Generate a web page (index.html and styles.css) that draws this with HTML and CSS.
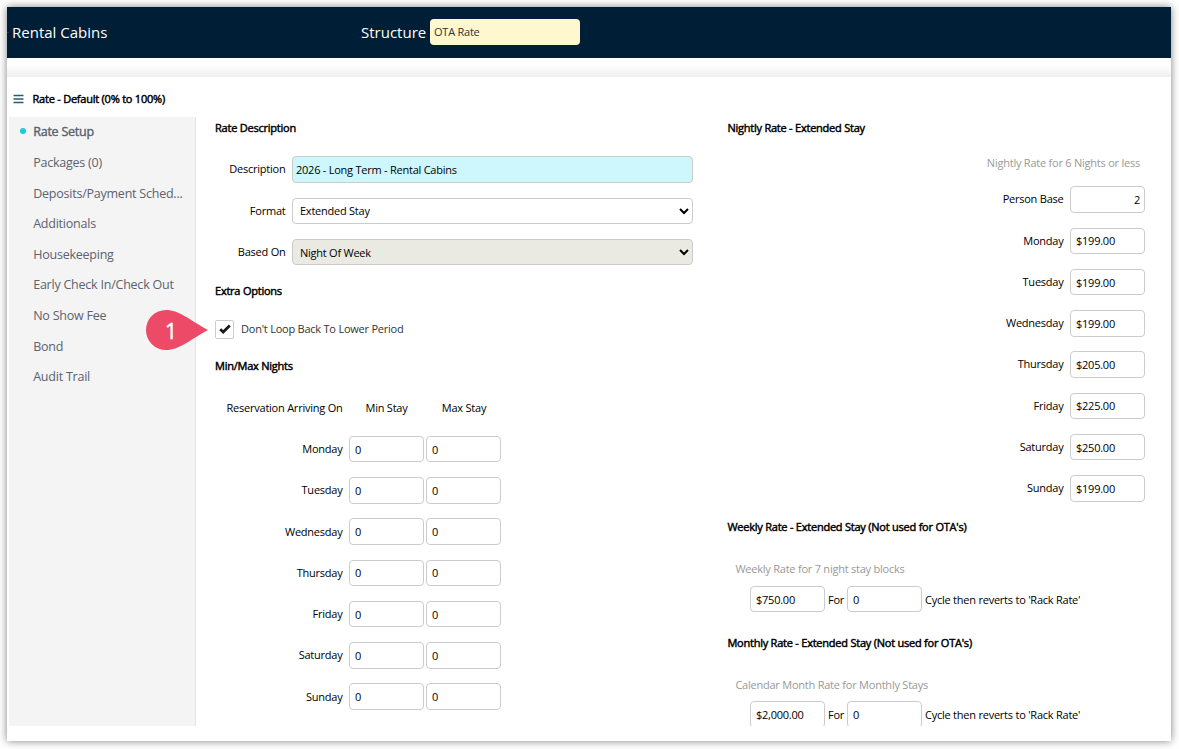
FILE: index.html
```html
<!DOCTYPE html>
<html lang="en">
<head>
    <meta charset="UTF-8">
    <meta name="viewport" content="width=device-width, initial-scale=1.0">
    <title>Rate Setup</title>
    <link rel="stylesheet" href="styles.css">
</head>
<body>
    <div class="window">
        <header class="topbar">
            <span class="dash">-</span>
            <h1>Rental Cabins</h1>
            <label class="structure-label">Structure</label>
            <input class="structure" type="text" value="OTA Rate">
        </header>
        <div class="band"></div>
        <div class="page-title">
            <svg class="menu-icon" width="11" height="10" viewBox="0 0 11 10"><path d="M0.5 1.5h10M0.5 5h10M0.5 8.5h10" stroke="#2f5a6e" stroke-width="1.4"/></svg>
            <h2 class="heading">Rate - Default (0% to 100%)</h2>
        </div>
        <div class="body">
            <nav class="sidebar">
                <a class="active">Rate Setup</a>
                <a>Packages (0)</a>
                <a>Deposits/Payment Sched...</a>
                <a>Additionals</a>
                <a>Housekeeping</a>
                <a>Early Check In/Check Out</a>
                <a>No Show Fee</a>
                <a>Bond</a>
                <a>Audit Trail</a>
            </nav>

            <!-- Rate details -->
            <main class="details">
                <h3 class="heading">Rate Description</h3>
                <div class="row"><label>Description</label><input class="wide filled" type="text" value="2026 - Long Term - Rental Cabins"></div>
                <div class="row"><label>Format</label><select class="wide"><option>Extended Stay</option></select></div>
                <div class="row"><label>Based On</label><select class="wide locked"><option>Night Of Week</option></select></div>

                <h3 class="heading extra">Extra Options</h3>
                <div class="check-row">
                    <span class="checkbox"><svg width="12" height="10" viewBox="0 0 12 10"><path d="M1.2 5.2 4.2 8 10.8 1.4" fill="none" stroke="#1c1c1c" stroke-width="2.8"/></svg></span>
                    <span class="check-label">Don't Loop Back To Lower Period</span>
                    <div class="marker">
                        <svg width="62" height="40" viewBox="0 0 62 40"><path d="M20 0C33 0 42 9 62 20C42 31 33 40 20 40A20 20 0 0 1 20 0Z" fill="#ec4a67"/></svg>
                        <span>1</span>
                    </div>
                </div>

                <h3 class="heading minmax">Min/Max Nights</h3>
                <div class="row nights head"><label>Reservation Arriving On</label><span>Min Stay</span><span>Max Stay</span></div>
                <div class="row nights"><label>Monday</label><input type="text" value="0"><input type="text" value="0"></div>
                <div class="row nights"><label>Tuesday</label><input type="text" value="0"><input type="text" value="0"></div>
                <div class="row nights"><label>Wednesday</label><input type="text" value="0"><input type="text" value="0"></div>
                <div class="row nights"><label>Thursday</label><input type="text" value="0"><input type="text" value="0"></div>
                <div class="row nights"><label>Friday</label><input type="text" value="0"><input type="text" value="0"></div>
                <div class="row nights"><label>Saturday</label><input type="text" value="0"><input type="text" value="0"></div>
                <div class="row nights"><label>Sunday</label><input type="text" value="0"><input type="text" value="0"></div>
            </main>

            <!-- Rate amounts -->
            <section class="rates">
                <h3 class="heading">Nightly Rate - Extended Stay</h3>
                <p class="hint right">Nightly Rate for 6 Nights or less</p>
                <div class="row"><label>Person Base</label><input class="number" type="text" value="2"></div>
                <div class="row"><label>Monday</label><input type="text" value="$199.00"></div>
                <div class="row"><label>Tuesday</label><input type="text" value="$199.00"></div>
                <div class="row"><label>Wednesday</label><input type="text" value="$199.00"></div>
                <div class="row"><label>Thursday</label><input type="text" value="$205.00"></div>
                <div class="row"><label>Friday</label><input type="text" value="$225.00"></div>
                <div class="row"><label>Saturday</label><input type="text" value="$250.00"></div>
                <div class="row"><label>Sunday</label><input type="text" value="$199.00"></div>

                <h3 class="heading weekly">Weekly Rate - Extended Stay (Not used for OTA's)</h3>
                <p class="hint">Weekly Rate for 7 night stay blocks</p>
                <div class="cycle"><input type="text" value="$750.00"><span class="for">For</span><input type="text" value="0"><span>Cycle then reverts to 'Rack Rate'</span></div>

                <h3 class="heading monthly">Monthly Rate - Extended Stay (Not used for OTA's)</h3>
                <p class="hint">Calendar Month Rate for Monthly Stays</p>
                <div class="cycle"><input type="text" value="$2,000.00"><span class="for">For</span><input type="text" value="0"><span>Cycle then reverts to 'Rack Rate'</span></div>
            </section>
        </div>
    </div>
</body>
</html>
```
FILE: styles.css
```css
* { box-sizing: border-box; }
body { margin: 0; padding: 7px 8px 8px 7px; height: 749px; overflow: hidden; background: #fff; font-family: "Open Sans", sans-serif; font-size: 11px; letter-spacing: -0.23px; color: #000; }
h1, h2, h3, p { margin: 0; font-weight: 400; }
.window { height: 734px; background: #fff; box-shadow: 0 0 8px rgba(0, 0, 0, 0.5); }

.topbar { display: flex; align-items: center; height: 51px; padding-bottom: 2px; background: #001e36; color: #fff; font-size: 15px; letter-spacing: 0; }
.dash { width: 5px; font-size: 5px; color: #a98a55; }
.topbar h1 { width: 349px; font-size: 15px; }
.topbar .structure-label { width: 69px; }
.topbar .structure { width: 150px; height: 26px; padding: 0 4px; border: none; background: #fff8cf; color: #333; }
.band { height: 19px; background: linear-gradient(#fff 35%, #efefef); }

.page-title { display: flex; align-items: center; height: 40px; padding: 4px 0 0 6px; }
.menu-icon { margin-right: 8.5px; }
.heading { height: 22px; line-height: 22px; font-size: 11px; -webkit-text-stroke: 0.45px #000; white-space: nowrap; }

.body { display: flex; height: 609px; overflow: hidden; padding-left: 2px; }
.sidebar { width: 187px; height: 609px; padding-top: 0.4px; background: #f4f4f4; border-right: 1px solid #e6e6e6; }
.sidebar a { display: block; position: relative; height: 30.6px; padding-left: 24.2px; line-height: 30.6px; font-size: 12.5px; color: #5b6270; white-space: nowrap; }
.sidebar .active { -webkit-text-stroke: 0.4px #5b6270; }
.sidebar .active::before { content: ""; position: absolute; left: 11px; top: 10.5px; width: 6px; height: 6px; border-radius: 50%; background: #1bcbdb; }

.details { width: 512px; padding-left: 19px; }
.rates { width: 437px; padding-left: 19.4px; }
.row { display: flex; align-items: center; height: 41.25px; }
.row label { text-align: right; margin-right: 6px; padding: 0 0.5px 1.4px 0; white-space: nowrap; }
input, select { width: 75px; height: 26.5px; padding: 0 5px; border: 1px solid #ccc; border-radius: 4px; background: #fff; font-family: inherit; font-size: 11px; letter-spacing: -0.24px; color: #000; }

.details .heading + .row { margin-top: 10px; }
.details .row label { width: 71px; }
.wide { width: 401px; padding: 0 3px; }
.filled { background: #cef7fd; }
.locked { background: #eaeae2; }

.extra { margin-top: 7px; }
.check-row { display: flex; align-items: center; position: relative; height: 41px; margin-top: 7px; color: #333; }
.check-label { padding-bottom: 1px; }
.checkbox { display: flex; align-items: center; justify-content: center; width: 19px; height: 19px; margin-right: 7px; border: 1px solid #ccc; border-radius: 2px; }
.marker { position: absolute; left: -69px; top: 1px; width: 62px; height: 40px; }
.marker span { position: absolute; left: 0; top: 0; width: 50px; line-height: 40px; text-align: center; font-size: 22px; -webkit-text-stroke: 0.4px #fff; color: #fff; }

.minmax { margin-top: 5px; }
.details .minmax + .row { margin-top: 10.6px; }
.details .nights label { width: 128px; }
.nights input + input { margin-left: 2px; }
.nights span { width: 75px; text-align: center; }
.nights span + span { margin-left: 2.5px; }

.rates .row { justify-content: flex-end; }
.rates .number { text-align: right; padding-right: 4px; }
.hint { height: 31px; line-height: 31px; padding-left: 8px; margin-top: 15px; color: #999; }
.hint.right { height: 32px; line-height: 31px; margin-top: 8px; padding-right: 5px; text-align: right; }
.weekly { margin-top: 7px; }
.monthly { margin-top: 17.5px; }
.cycle { display: flex; align-items: center; height: 30px; padding-left: 22.6px; }
.cycle span { margin-left: 3px; white-space: nowrap; }
.cycle .for { width: 19px; }
```
